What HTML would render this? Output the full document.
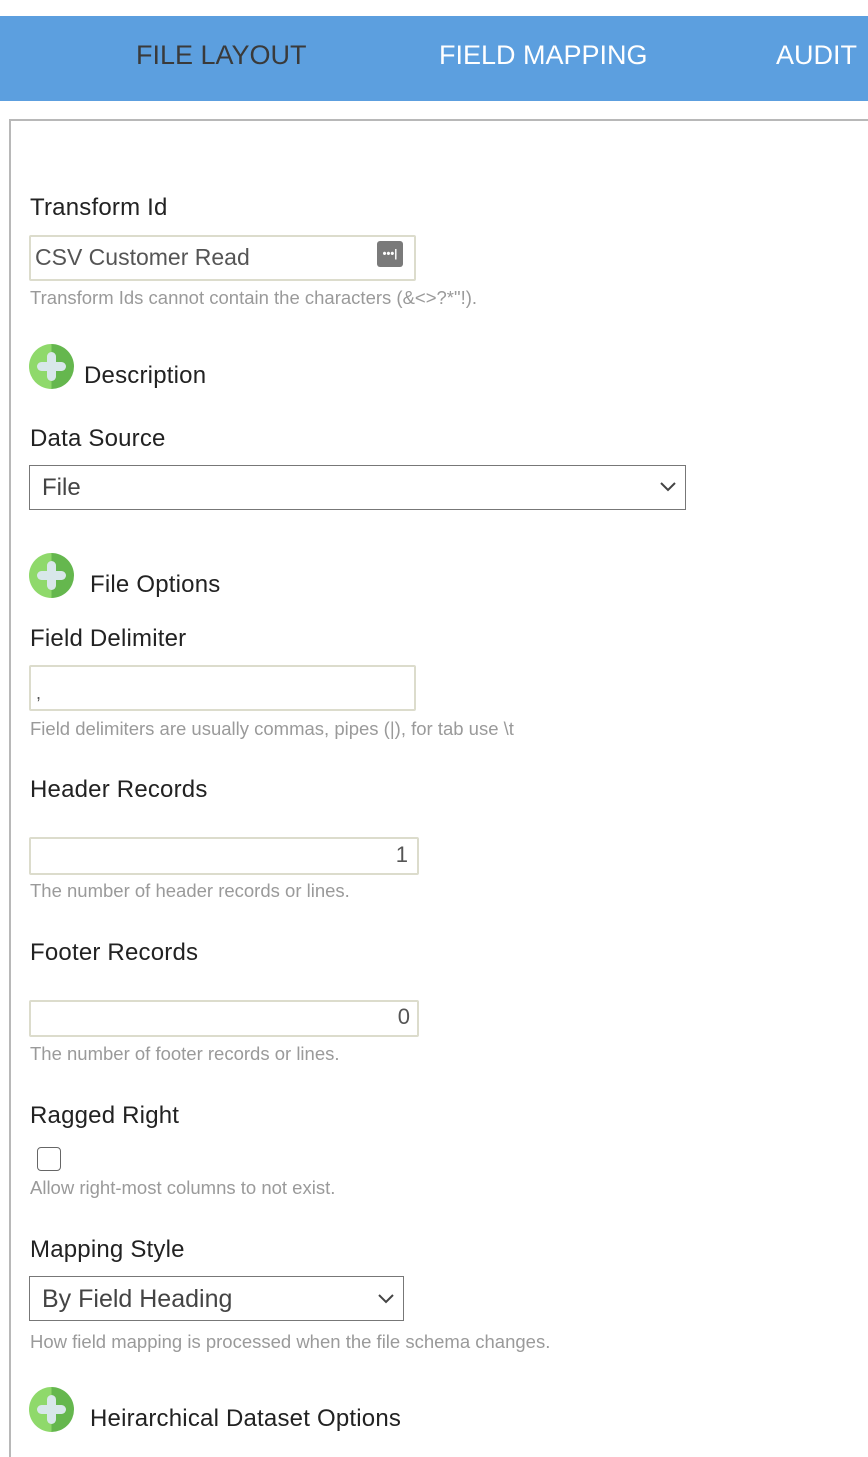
<!DOCTYPE html>
<html style="overflow:hidden;height:1457px"><head><meta charset="utf-8"><style>
body{margin:0;width:868px;height:1457px;position:relative;overflow:hidden;background:#fff;font-family:"Liberation Sans",sans-serif;}
.a{position:absolute;white-space:nowrap;line-height:30px;height:30px;}
.l{font-size:24px;letter-spacing:0.2px;color:#222;}
.h{font-size:18.5px;color:#9a9a9a;}
.box{position:absolute;box-sizing:border-box;border:2px solid #dcdccc;border-radius:2px;}
.sel{position:absolute;box-sizing:border-box;border:1px solid #777;}
.plus{position:absolute;width:45px;height:45px;}
.nav{font-size:27px;line-height:40px;height:40px;}
</style></head><body>
<div style="position:absolute;left:0;top:16px;width:868px;height:85px;background:#5c9fdf"></div>
<div class="a nav" style="left:136px;top:35px;color:#3a3a3a">FILE LAYOUT</div>
<div class="a nav" style="left:439px;top:35px;color:#fff">FIELD MAPPING</div>
<div class="a nav" style="left:776px;top:35px;color:#fff">AUDIT</div>
<div style="position:absolute;left:9px;top:119px;width:859px;height:1338px;border-left:2px solid #b8b8b8;border-top:2px solid #b8b8b8;box-sizing:border-box"></div>

<div class="a l" style="left:30px;top:193px">Transform Id</div>
<div class="box" style="left:29px;top:235px;width:387px;height:46px"></div>
<div class="a" style="left:35px;top:242px;font-size:23px;color:#555">CSV Customer Read</div>
<div style="position:absolute;left:377px;top:241px;width:26px;height:26px;background:#7a7a7a;border-radius:3px;color:#fff;font-size:11px;line-height:26px;text-align:center;font-weight:bold">•••|</div>
<div class="a h" style="left:30px;top:283px">Transform Ids cannot contain the characters (&amp;&lt;&gt;?*"!).</div>

<svg class="plus" style="left:29px;top:344px" viewBox="0 0 45 45"><path d="M22.5 0A22.5 22.5 0 0 0 22.5 45Z" fill="#8fd96b"/><path d="M22.5 0A22.5 22.5 0 0 1 22.5 45Z" fill="#65b74e"/><rect x="18" y="8" width="9" height="29" rx="4.5" fill="#d8e7ea"/><rect x="8" y="18" width="29" height="9" rx="4.5" fill="#d8e7ea"/></svg>
<div class="a l" style="left:84px;top:361px">Description</div>

<div class="a l" style="left:30px;top:424px">Data Source</div>
<div class="sel" style="left:29px;top:465px;width:657px;height:45px"></div>
<div class="a" style="left:42px;top:473px;font-size:24px;color:#444">File</div>
<svg style="position:absolute;left:660px;top:482px" width="16" height="10"><path d="M1 1L8 8L15 1" stroke="#444" stroke-width="2" fill="none"/></svg>

<svg class="plus" style="left:29px;top:553px" viewBox="0 0 45 45"><path d="M22.5 0A22.5 22.5 0 0 0 22.5 45Z" fill="#8fd96b"/><path d="M22.5 0A22.5 22.5 0 0 1 22.5 45Z" fill="#65b74e"/><rect x="18" y="8" width="9" height="29" rx="4.5" fill="#d8e7ea"/><rect x="8" y="18" width="29" height="9" rx="4.5" fill="#d8e7ea"/></svg>
<div class="a l" style="left:90px;top:570px">File Options</div>

<div class="a l" style="left:30px;top:624px">Field Delimiter</div>
<div class="box" style="left:29px;top:665px;width:387px;height:46px"></div>
<div class="a" style="left:36px;top:678px;font-size:18px;color:#555">,</div>
<div class="a h" style="left:30px;top:714px">Field delimiters are usually commas, pipes (|), for tab use \t</div>

<div class="a l" style="left:30px;top:775px">Header Records</div>
<div class="box" style="left:29px;top:837px;width:390px;height:38px"></div>
<div class="a" style="left:300px;width:108px;text-align:right;top:840px;font-size:22px;color:#555">1</div>
<div class="a h" style="left:30px;top:876px">The number of header records or lines.</div>

<div class="a l" style="left:30px;top:938px">Footer Records</div>
<div class="box" style="left:29px;top:1000px;width:390px;height:37px"></div>
<div class="a" style="left:300px;width:110px;text-align:right;top:1002px;font-size:22px;color:#555">0</div>
<div class="a h" style="left:30px;top:1039px">The number of footer records or lines.</div>

<div class="a l" style="left:30px;top:1101px">Ragged Right</div>
<div style="position:absolute;left:37px;top:1147px;width:24px;height:24px;box-sizing:border-box;border:1px solid #666;border-radius:4px"></div>
<div class="a h" style="left:30px;top:1173px">Allow right-most columns to not exist.</div>

<div class="a l" style="left:30px;top:1235px">Mapping Style</div>
<div class="sel" style="left:29px;top:1276px;width:375px;height:45px"></div>
<div class="a" style="left:42px;top:1284px;font-size:25px;color:#444">By Field Heading</div>
<svg style="position:absolute;left:378px;top:1294px" width="16" height="10"><path d="M1 1L8 8L15 1" stroke="#444" stroke-width="2" fill="none"/></svg>
<div class="a h" style="left:30px;top:1327px">How field mapping is processed when the file schema changes.</div>

<svg class="plus" style="left:29px;top:1387px" viewBox="0 0 45 45"><path d="M22.5 0A22.5 22.5 0 0 0 22.5 45Z" fill="#8fd96b"/><path d="M22.5 0A22.5 22.5 0 0 1 22.5 45Z" fill="#65b74e"/><rect x="18" y="8" width="9" height="29" rx="4.5" fill="#d8e7ea"/><rect x="8" y="18" width="29" height="9" rx="4.5" fill="#d8e7ea"/></svg>
<div class="a l" style="left:90px;top:1404px">Heirarchical Dataset Options</div>
</body></html>
